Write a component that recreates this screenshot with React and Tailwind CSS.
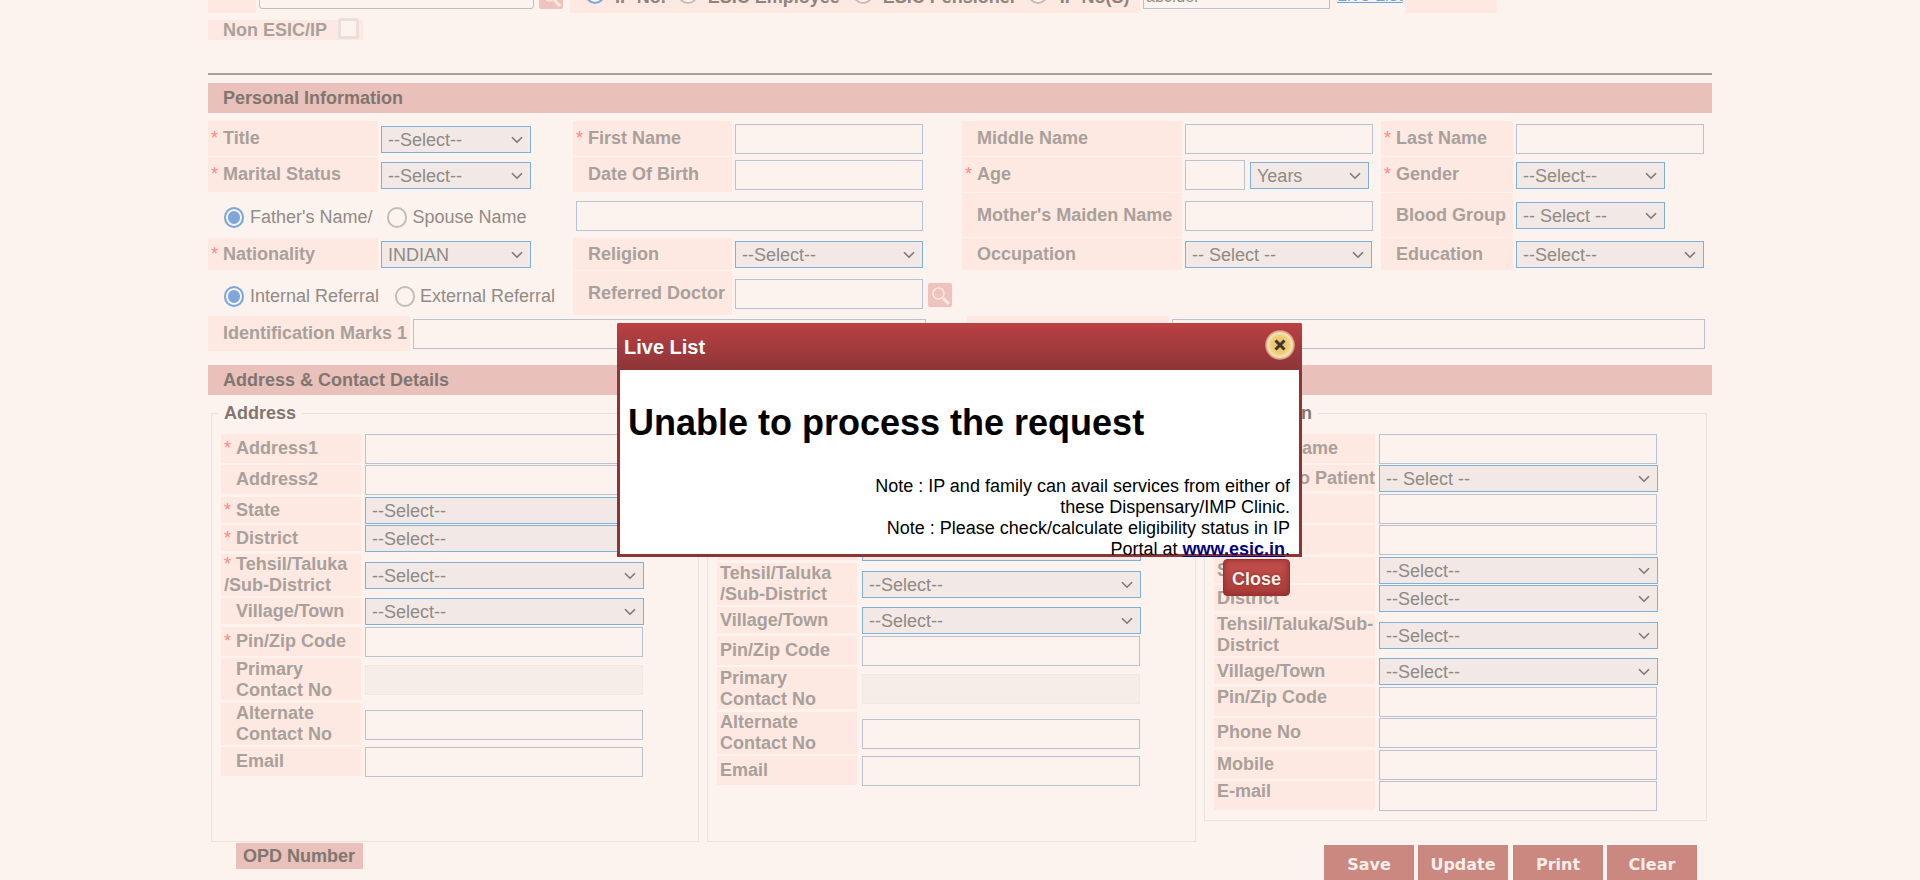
import React from 'react';

function Star() {
  return <span className="inline-block w-[12px] font-normal text-[#ff8a84]">*</span>;
}

function Label({ star, indent, width, top, children, className = '' }) {
  return (
    <div
      className={`${width} ${indent && !star ? 'pl-[15px]' : 'pl-[3px]'} ${top ? 'items-start' : 'items-center'} flex self-stretch mb-px shrink-0 bg-[#fde9e2] text-[18px] leading-[21px] font-bold text-[#a8a09b] whitespace-nowrap ${className}`}
    >
      <span>
        {star && <Star />}
        {children}
      </span>
    </div>
  );
}

function Input({ width, className = '', disabled }) {
  return (
    <input
      type="text"
      disabled={disabled}
      className={`${width} h-[30px] shrink-0 border ${disabled ? 'border-[#f1e8e3] bg-[#f5ede8]' : 'border-[#b8c2d2] bg-[#fdf3ee]'} ${className}`}
    />
  );
}

function Select({ width, value = '--Select--', className = '' }) {
  return (
    <div className={`relative h-[27px] shrink-0 ${width} ${className}`}>
      <select
        defaultValue={value}
        className="appearance-none block w-full h-[27px] border border-[#7fb0d8] bg-[#f2e9e6] pl-[6px] text-[18px] text-[#8f8984]"
      >
        <option>{value}</option>
      </select>
      <svg viewBox="0 0 12 8" className="absolute right-[8px] top-[10px] w-[12px] h-[8px] pointer-events-none" fill="none">
        <path d="M1 1.2l5 5 5-5" stroke="#7f7671" strokeWidth="1.6" />
      </svg>
    </div>
  );
}

function Radio({ checked, className = '' }) {
  return (
    <input
      type="radio"
      defaultChecked={checked}
      className={`appearance-none w-[20px] h-[21px] shrink-0 rounded-full border-2 border-[#c4bcb9] bg-[#fdf3ee] checked:border-[#7ea8dc] checked:bg-[#7ea8dc] checked:shadow-[inset_0_0_0_2px_#fdf3ee] ${className}`}
    />
  );
}

function SearchBtn({ className = '' }) {
  return (
    <div className={`w-[24px] h-[24px] shrink-0 rounded-[2px] bg-[#eec3bd] ${className}`}>
      <svg viewBox="0 0 24 24" className="w-[24px] h-[24px]" fill="none">
        <circle cx="10.5" cy="10.5" r="5.5" stroke="#fae6e2" strokeWidth="1.5" />
        <path d="M15 15l6 6" stroke="#fae6e2" strokeWidth="3" />
      </svg>
    </div>
  );
}

function Bar({ children }) {
  return (
    <div className="h-[30px] pl-[15px] flex items-center bg-[#eac0ba] text-[18px] font-bold text-[#7f7671]">
      {children}
    </div>
  );
}

const leftRows = [
  { label: 'Address1', star: true, type: 'input', h: 'h-[30px]' },
  { label: 'Address2', type: 'input', h: 'h-[30px]', mt: 'mt-px' },
  { label: 'State', star: true, type: 'select', h: 'h-[27px]', mt: 'mt-[2px]' },
  { label: 'District', star: true, type: 'select', h: 'h-[27px]', mt: 'mt-px' },
  { label: ['Tehsil/Taluka', '/Sub-District'], star: true, type: 'select', h: 'h-[43px]', mt: 'mt-[2px]' },
  { label: 'Village/Town', type: 'select', h: 'h-[27px]', mt: 'mt-px' },
  { label: 'Pin/Zip Code', star: true, type: 'input', h: 'h-[30px]', mt: 'mt-[2px]' },
  { label: ['Primary', 'Contact No'], type: 'disabled', h: 'h-[43px]', mt: 'mt-px', labelClass: 'pt-[2px]' },
  { label: ['Alternate', 'Contact No'], type: 'input', h: 'h-[43px]', mt: 'mt-[2px]' },
  { label: 'Email', type: 'input', h: 'h-[30px]', mt: 'mt-px' },
];

const middleRows = [
  { label: 'Address1', type: 'input', h: 'h-[30px]', mt: 'mt-[9px]' },
  { label: 'Address2', type: 'input', h: 'h-[30px]', mt: 'mt-px' },
  { label: 'State', type: 'select', h: 'h-[27px]', mt: 'mt-[2px]' },
  { label: 'District', type: 'select', h: 'h-[27px]', mt: 'mt-px' },
  { label: ['Tehsil/Taluka', '/Sub-District'], type: 'select', h: 'h-[43px]', mt: 'mt-[2px]' },
  { label: 'Village/Town', type: 'select', h: 'h-[27px]', mt: 'mt-px' },
  { label: 'Pin/Zip Code', type: 'input', h: 'h-[30px]', mt: 'mt-[2px]' },
  { label: ['Primary', 'Contact No'], type: 'disabled', h: 'h-[43px]', mt: 'mt-px', labelClass: 'pt-[2px]' },
  { label: ['Alternate', 'Contact No'], type: 'input', h: 'h-[43px]', mt: 'mt-[2px]' },
  { label: 'Email', type: 'input', h: 'h-[30px]', mt: 'mt-px' },
];

const rightRows = [
  { label: 'Contact Name', type: 'input', h: 'h-[30px]' },
  { label: 'Relation to Patient', type: 'select', value: '-- Select --', h: 'h-[27px]', mt: 'mt-px' },
  { label: 'Address1', type: 'input', h: 'h-[30px]', mt: 'mt-[2px]' },
  { label: 'Address2', type: 'input', h: 'h-[30px]', mt: 'mt-px' },
  { label: 'State', type: 'select', h: 'h-[27px]', mt: 'mt-[2px]' },
  { label: 'District', type: 'select', h: 'h-[27px]', mt: 'mt-px' },
  { label: ['Tehsil/Taluka/Sub-', 'District'], type: 'select', h: 'h-[43px]', mt: 'mt-[2px]' },
  { label: 'Village/Town', type: 'select', h: 'h-[27px]', mt: 'mt-px' },
  { label: 'Pin/Zip Code', type: 'input', h: 'h-[30px]', mt: 'mt-[2px]', top: true },
  { label: 'Phone No', type: 'input', h: 'h-[30px]', mt: 'mt-px' },
  { label: 'Mobile', type: 'input', h: 'h-[30px]', mt: 'mt-[2px]' },
  { label: 'E-mail', type: 'input', h: 'h-[30px]', mt: 'mt-px', top: true },
];

function AddressBox({ title, rows, width, height, labelWidth, gap, indent }) {
  return (
    <fieldset className={`${width} ${height} shrink-0 border border-[#e9e2dd] pl-[9px] pt-[10px]`}>
      <legend className="-ml-[3px] px-[6px] text-[18px] leading-[21px] font-bold text-[#7f7671]">{title}</legend>
      {rows.map((row, i) => {
        const lines = Array.isArray(row.label) ? row.label : [row.label];
        return (
          <div key={i} className={`flex items-center ${gap} ${row.h} ${row.mt || ''}`}>
            <Label star={row.star} indent={indent} width={labelWidth} top={row.top} className={row.labelClass}>
              {lines.map((line, j) => (
                <React.Fragment key={j}>
                  {j > 0 && <br />}
                  {line}
                </React.Fragment>
              ))}
            </Label>
            {row.type === 'select' && <Select width="w-[279px]" value={row.value} />}
            {row.type === 'input' && <Input width="w-[278px]" />}
            {row.type === 'disabled' && <Input width="w-[278px]" disabled />}
          </div>
        );
      })}
    </fieldset>
  );
}

export default function App() {
  return (
    <div className="relative h-[880px] overflow-hidden bg-[#fdf3ee] font-['Liberation_Sans',sans-serif]">
      <div className="w-[1504px] ml-[208px]">
        {/* scrolled off row */}
        <div className="flex items-end h-[13px] overflow-hidden">
          <div className="w-[48px] h-[13px] shrink-0 bg-[#fde9e2]"></div>
          <input type="text" className="w-[275px] h-[24px] ml-[3px] mb-[4px] shrink-0 rounded-[3px] border border-[#c4bdb9] bg-[#fdf3ee]" />
          <SearchBtn className="ml-[5px] mb-[4px]" />
          <div className="flex items-end w-[570px] h-[13px] ml-[7px] shrink-0 bg-[#fde9e2] text-[18px] leading-[21px] font-bold text-[#8d847e] whitespace-nowrap">
            <Radio checked className="ml-[15px] mb-[9px]" />
            <span className="ml-[10px] mb-[5px]">IP No.</span>
            <Radio className="ml-[12px] mb-[9px]" />
            <span className="ml-[10px] mb-[5px]">ESIC Employee</span>
            <Radio className="ml-[13px] mb-[9px]" />
            <span className="ml-[10px] mb-[5px]">ESIC Pensioner</span>
            <Radio className="ml-[11px] mb-[9px]" />
            <span className="ml-[12px] mb-[5px]">IP No(S)</span>
          </div>
          <input type="text" defaultValue="abc.def" className="w-[187px] h-[24px] ml-[3px] mb-[4px] pl-[2px] shrink-0 border border-[#b8c2d2] bg-[#fdf3ee] text-[16px] text-[#8f8984]" />
          <span className="ml-[7px] mb-[7px] text-[18px] leading-[21px] text-[#6fa3dc] underline whitespace-nowrap">Live List</span>
          <div className="w-[92px] h-[13px] ml-[2px] shrink-0 bg-[#fde9e2]"></div>
        </div>

        <div className="flex items-center w-[155px] h-[20px] mt-[7px] pl-[15px] bg-[#fde9e2] text-[18px] font-bold text-[#a8a09b] whitespace-nowrap">
          Non ESIC/IP
          <input type="checkbox" className="appearance-none w-[21px] h-[21px] ml-auto mr-[4px] -mt-[3px] shrink-0 rounded-[3px] border-[3px] border-[#ebdfdb] bg-[#fdf3ee]" />
        </div>

        <div className="h-[2px] mt-[33px] bg-[#a8a099]"></div>

        <div className="mt-[8px]">
          <Bar>Personal Information</Bar>
        </div>

        <div className="mt-[8px]">
          <div className="flex items-center gap-[3px] h-[36px]">
            <Label star width="w-[170px]">Title</Label>
            <Select width="w-[150px]" />
            <Label star width="w-[159px]" className="ml-[39px]">First Name</Label>
            <Input width="w-[188px]" />
            <Label indent width="w-[220px]" className="ml-[36px]">Middle Name</Label>
            <Input width="w-[188px]" />
            <Label star width="w-[132px]" className="ml-[5px]">Last Name</Label>
            <Input width="w-[188px]" />
          </div>
          <div className="flex items-center gap-[3px] h-[36px]">
            <Label star width="w-[170px]">Marital Status</Label>
            <Select width="w-[150px]" />
            <Label indent width="w-[159px]" className="ml-[39px]">Date Of Birth</Label>
            <Input width="w-[188px]" />
            <Label star width="w-[220px]" className="ml-[36px]">Age</Label>
            <Input width="w-[60px]" />
            <Select width="w-[119px]" value="Years" className="ml-[2px]" />
            <Label star width="w-[132px]" className="ml-[9px]">Gender</Label>
            <Select width="w-[149px]" />
          </div>
          <div className="flex items-center h-[45px]">
            <div className="flex items-center w-[368px] shrink-0 pl-[16px] pt-[3px] text-[18px] text-[#928a85]">
              <Radio checked />
              <span className="ml-[6px]">Father's Name/</span>
              <Radio className="ml-[15px]" />
              <span className="ml-[5px]">Spouse Name</span>
            </div>
            <Input width="w-[347px]" />
            <Label indent width="w-[220px]" className="ml-[39px]">Mother's Maiden Name</Label>
            <Input width="w-[188px]" className="ml-[3px]" />
            <Label indent width="w-[132px]" className="ml-[8px]">Blood Group</Label>
            <Select width="w-[149px]" value="-- Select --" className="ml-[3px]" />
          </div>
          <div className="flex items-center gap-[3px] h-[33px]">
            <Label star width="w-[170px]">Nationality</Label>
            <Select width="w-[150px]" value="INDIAN" />
            <Label indent width="w-[159px]" className="ml-[39px]">Religion</Label>
            <Select width="w-[188px]" />
            <Label indent width="w-[220px]" className="ml-[36px]">Occupation</Label>
            <Select width="w-[187px]" value="-- Select --" />
            <Label indent width="w-[132px]" className="ml-[6px]">Education</Label>
            <Select width="w-[188px]" />
          </div>
          <div className="flex items-center h-[45px]">
            <div className="flex items-center w-[365px] shrink-0 pl-[16px] pt-[5px] text-[18px] text-[#928a85]">
              <Radio checked />
              <span className="ml-[6px]">Internal Referral</span>
              <Radio className="ml-[16px]" />
              <span className="ml-[5px]">External Referral</span>
            </div>
            <Label indent width="w-[159px]">Referred Doctor</Label>
            <Input width="w-[188px]" className="ml-[3px]" />
            <SearchBtn className="ml-[5px] mt-[3px]" />
          </div>
          <div className="flex items-center gap-[3px] h-[36px]">
            <Label indent width="w-[202px]">Identification Marks 1</Label>
            <Input width="w-[513px]" />
            <Label indent width="w-[202px]" className="ml-[38px]">Identification Marks 2</Label>
            <Input width="w-[533px]" />
          </div>
        </div>

        <div className="mt-[13px]">
          <Bar>Address &amp; Contact Details</Bar>
        </div>

        <div className="flex items-start gap-[8px] mt-[8px] ml-[3px]">
          <AddressBox title="Address" rows={leftRows} width="w-[488px]" height="h-[439px]" labelWidth="w-[140px]" gap="gap-[4px]" indent />
          <AddressBox title="Permanent Address" rows={middleRows} width="w-[489px]" height="h-[439px]" labelWidth="w-[140px]" gap="gap-[5px]" />
          <AddressBox title="Next of Kin" rows={rightRows} width="w-[503px]" height="h-[418px]" labelWidth="w-[161px]" gap="gap-[4px]" />
        </div>

        <div className="flex items-start mt-px">
          <div className="flex items-center w-[127px] h-[26px] ml-[28px] pl-[7px] bg-[#eac0ba] text-[18px] font-bold text-[#7f7671] whitespace-nowrap">OPD Number</div>
          <div className="flex ml-auto mr-[15px] mt-[2px] font-['DejaVu_Sans',sans-serif] text-[16px] font-bold text-[#fbeee9]">
            <button className="w-[90px] h-[40px] bg-[#cb8880]">Save</button>
            <button className="w-[90px] h-[40px] ml-[4px] bg-[#cb8880]">Update</button>
            <button className="w-[90px] h-[40px] ml-[5px] bg-[#cb8880]">Print</button>
            <button className="w-[90px] h-[40px] ml-[4px] bg-[#cb8880]">Clear</button>
          </div>
        </div>
      </div>

      {/* Live List dialog */}
      <div className="absolute left-[617px] top-[323px] w-[685px] h-[234px] border-x-[3px] border-b-[3px] border-[#8e3436] bg-white rounded-t-[2px]">
        <div className="flex items-center justify-between h-[47px] -mx-[3px] pl-[7px] pr-[7px] rounded-t-[2px] bg-gradient-to-b from-[#bb4044] to-[#8c3537]">
          <span className="text-[20px] font-bold text-white">Live List</span>
          <div className="flex items-center justify-center w-[30px] h-[30px] -mt-[3px] rounded-full bg-[radial-gradient(circle,#e6b84e_0%,#efcf7c_42%,#f6e3b6_58%,#d98a6c99_72%,#b9444700_92%)]">
            <svg viewBox="0 0 12 12" className="w-[12px] h-[12px]">
              <path d="M1.5 1.5l9 9M10.5 1.5l-9 9" stroke="#3e3538" strokeWidth="3" />
            </svg>
          </div>
        </div>
        <h1 className="mt-[32px] ml-[8px] text-[36px] leading-[41px] font-bold text-black">Unable to process the request</h1>
        <p className="w-[425px] ml-auto mr-[9px] mt-[33px] text-right text-[18px] leading-[21px] text-black">
          Note : IP and family can avail services from either of these Dispensary/IMP Clinic.
          <br />
          Note : Please check/calculate eligibility status in IP Portal at <a href="#" className="font-bold text-[#000080] underline">www.esic.in</a>.
        </p>
        <button className="absolute right-[9px] top-[236px] w-[67px] h-[37px] pt-[3px] rounded-[4px] border border-[#9c3230] bg-gradient-to-b from-[#c4504d] to-[#a83c39] shadow-[inset_0_0_6px_#8f2c2a] text-[18px] font-bold text-[#fdf3ee] [text-shadow:0_0_2px_#7a2523]">
          Close
        </button>
      </div>
    </div>
  );
}
